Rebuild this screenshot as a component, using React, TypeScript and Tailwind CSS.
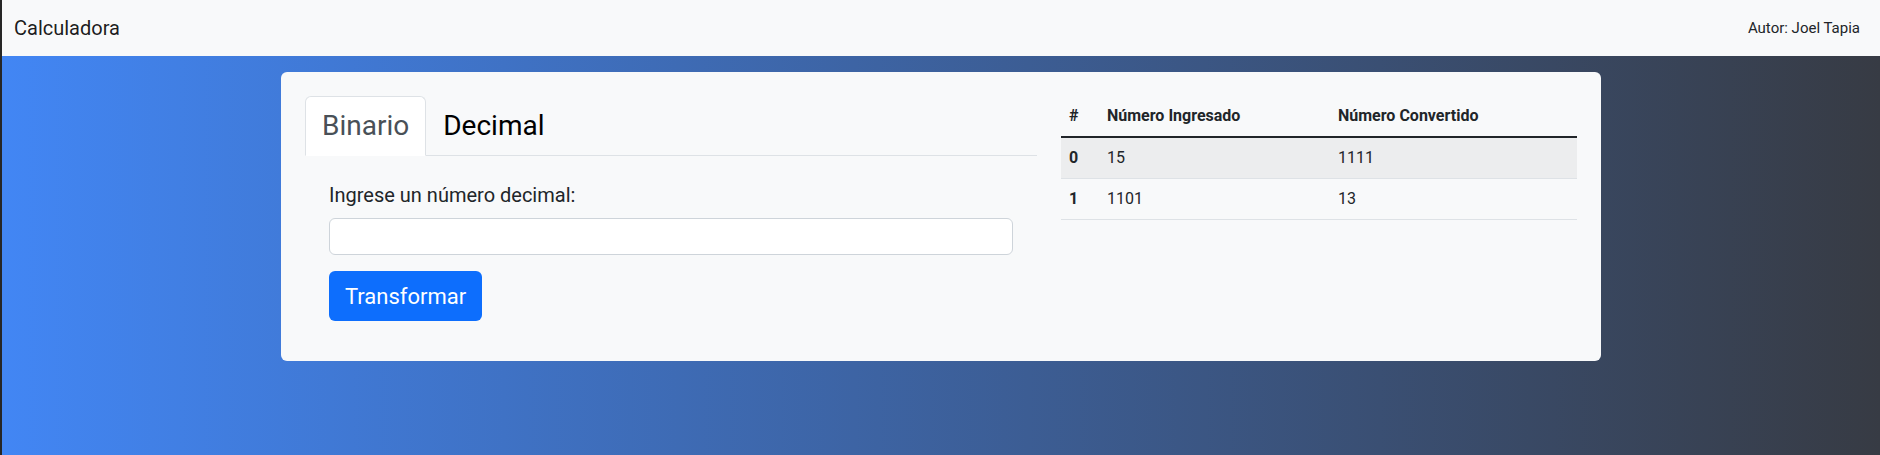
import React, { useState } from "react";

const rows = [
  { id: 0, input: "15", output: "1111" },
  { id: 1, input: "1101", output: "13" },
];

export default function App() {
  const [tab, setTab] = useState("binario");

  return (
    <div
      className="min-h-screen border-l-2 border-[#262626] bg-[linear-gradient(to_right,#4286f4,#373b44)] text-[#212529]"
      style={{ fontFamily: 'Roboto, "Noto Sans", sans-serif' }}
    >
      {/* navbar */}
      <nav className="flex h-[56px] items-center justify-between bg-[#f8f9fa] pl-3 pr-5">
        <span className="text-[20px] text-black/90">Calculadora</span>
        <span className="text-[15px]">Autor: Joel Tapia</span>
      </nav>

      <main className="mx-auto mt-4 w-[1320px]">
        <div className="flex gap-6 rounded-md bg-[#f8f9fa] p-6">
          {/* converter */}
          <div className="w-[732px]">
            <ul className="flex border-b border-[#dee2e6]">
              <li
                onClick={() => setTab("binario")}
                className={`-mb-px cursor-pointer rounded-t-md border px-4 py-2 text-[28px] leading-[1.5] ${
                  tab === "binario"
                    ? "border-[#dee2e6] border-b-white bg-white text-[#495057]"
                    : "border-transparent text-black"
                }`}
              >
                Binario
              </li>
              <li
                onClick={() => setTab("decimal")}
                className={`-mb-px cursor-pointer rounded-t-md border px-4 py-2 text-[28px] leading-[1.5] ${
                  tab === "decimal"
                    ? "border-[#dee2e6] border-b-white bg-white text-[#495057]"
                    : "border-transparent text-black"
                }`}
              >
                Decimal
              </li>
            </ul>

            <div className="px-6 pt-6 pb-4">
              <label className="mb-2 block text-[20px] leading-[1.5]" htmlFor="numero">
                Ingrese un número decimal:
              </label>
              <input
                id="numero"
                type="text"
                className="block h-[37px] w-full rounded-md border border-[#ced4da] bg-white px-3 text-base outline-none"
              />
              <button className="mt-4 h-[50px] rounded-md bg-[#0d6efd] px-4 text-[22px] text-white">
                Transformar
              </button>
            </div>
          </div>

          {/* history table */}
          <div className="flex-1">
            <table className="w-full table-fixed border-collapse text-left text-base">
              <thead>
                <tr className="border-b-2 border-[#212529]">
                  <th className="w-[38px] p-2 font-bold">#</th>
                  <th className="w-[231px] p-2 font-bold">Número Ingresado</th>
                  <th className="p-2 font-bold">Número Convertido</th>
                </tr>
              </thead>
              <tbody>
                {rows.map((r) => (
                  <tr
                    key={r.id}
                    className={`border-b border-[#dee2e6] ${r.id % 2 === 0 ? "bg-[#ecedee]" : ""}`}
                  >
                    <th className="p-2 font-bold">{r.id}</th>
                    <td className="p-2">{r.input}</td>
                    <td className="p-2">{r.output}</td>
                  </tr>
                ))}
              </tbody>
            </table>
          </div>
        </div>
      </main>
    </div>
  );
}
